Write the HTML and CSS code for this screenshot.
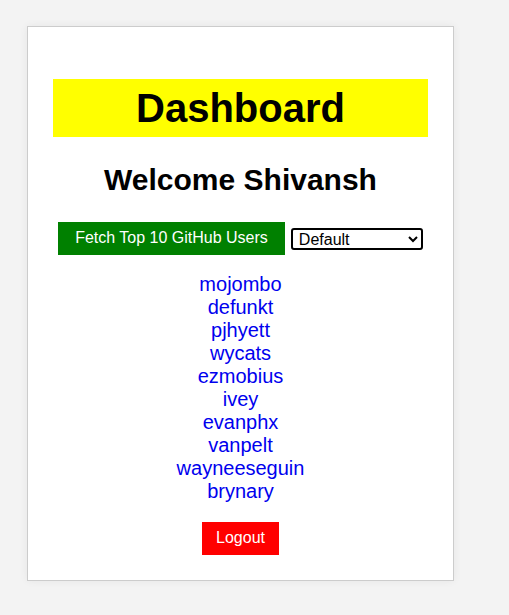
FILE: index.html
```html
<!DOCTYPE html>
<html>
<head>
<meta charset="utf-8">
<link rel="stylesheet" href="styles.css">
</head>
<body>
<div class="card">
  <h1 class="title">Dashboard</h1>
  <h2 class="welcome">Welcome Shivansh</h2>
  <div class="controls">
    <button class="fetch">Fetch Top 10 GitHub Users</button>
    <select class="sort">
      <option>Default</option>
    </select>
  </div>
  <ul class="users">
    <li><a href="#">mojombo</a></li>
    <li><a href="#">defunkt</a></li>
    <li><a href="#">pjhyett</a></li>
    <li><a href="#">wycats</a></li>
    <li><a href="#">ezmobius</a></li>
    <li><a href="#">ivey</a></li>
    <li><a href="#">evanphx</a></li>
    <li><a href="#">vanpelt</a></li>
    <li><a href="#">wayneeseguin</a></li>
    <li><a href="#">brynary</a></li>
  </ul>
  <div class="actions">
    <button class="logout">Logout</button>
  </div>
</div>
</body>
</html>
```
FILE: styles.css
```css
html, body {
  margin: 0;
  padding: 0;
}
body {
  background: #f3f3f3;
  font-family: "Liberation Sans", Arial, sans-serif;
  padding: 26px 0 0 27px;
  min-height: 615px;
  box-sizing: border-box;
}
.card {
  width: 375px;
  padding: 25px;
  background: #fff;
  border: 1px solid #cccccc;
  box-shadow: 0 0 8px rgba(0,0,0,0.06);
  text-align: center;
}
.title {
  background: #ffff00;
  font-size: 40px;
  font-weight: bold;
  margin: 27px 0 27px;
  padding: 6px 0;
  line-height: 46px;
}
.welcome {
  font-size: 30px;
  font-weight: bold;
  margin: -1px 0 25px;
  line-height: 34px;
}
.controls {
  display: flex;
  justify-content: center;
  align-items: center;
  gap: 6px;
}
.fetch {
  background: #008000;
  color: #fff;
  border: none;
  font-family: "Liberation Sans", Arial, sans-serif;
  font-size: 16px;
  line-height: 18px;
  padding: 7px 17px 8px;
  margin: 0;
}
.sort {
  width: 132px;
  height: 22px;
  font-family: "Liberation Sans", Arial, sans-serif;
  font-size: 16px;
  border: 2px solid #000;
  border-radius: 3px;
  background: #fff;
  color: #000;
  padding: 0 0 0 2px;
  margin: 0;
}
.users {
  list-style: none;
  margin: 18px 0 0;
  padding: 0;
}
.users li {
  font-size: 20px;
  line-height: 23px;
}
.users a {
  color: #0000ee;
  text-decoration: none;
}
.actions {
  margin-top: 19px;
}
.logout {
  background: #ff0000;
  color: #fff;
  border: none;
  font-family: "Liberation Sans", Arial, sans-serif;
  font-size: 16px;
  line-height: 18px;
  padding: 7px 14px 8px;
  margin: 0;
  display: inline-block;
  vertical-align: top;
}
```
